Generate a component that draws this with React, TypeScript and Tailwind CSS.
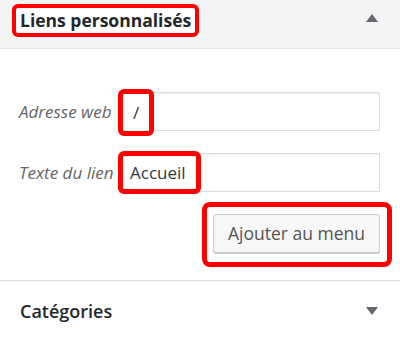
import React from "react";

const font = { fontFamily: '"Open Sans", "Noto Sans", sans-serif' };

function TriUp() {
  return (
    <svg width="12" height="8" viewBox="0 0 12 8">
      <polygon points="6,0 12,8 0,8" fill="#646970" />
    </svg>
  );
}
function TriDown() {
  return (
    <svg width="12" height="8" viewBox="0 0 12 8">
      <polygon points="0,0 12,0 6,8" fill="#646970" />
    </svg>
  );
}

export default function App() {
  return (
    <div className="w-[400px] h-[341px] bg-white overflow-hidden" style={font}>
      <div className="h-[49px] bg-[#f3f3f3] border-b border-[#e2e2e2] flex items-start justify-between pl-[12px] pr-[22px]">
        <div className="mt-[4px] h-[33px] border-[4px] border-[#ff0000] rounded-[6px] bg-white flex items-center px-[4px]">
          <span className="text-[17.5px] font-bold text-[#23282d] leading-none">Liens personnalisés</span>
        </div>
        <div className="mt-[14px]">
          <TriUp />
        </div>
      </div>

      <div className="pt-[43px] pl-[19px] pr-[20px]">
        <div className="flex items-center h-[39px]">
          <span className="w-[104px] text-[17px] italic text-[#666] whitespace-nowrap overflow-visible">Adresse web</span>
          <div className="relative flex-1 h-[39px] border border-[#ddd] shadow-[inset_0_1px_2px_rgba(0,0,0,0.07)] flex items-center">
            <div className="absolute left-[-6px] top-[-4px] w-[36px] h-[47px] border-[5px] border-[#ff0000] rounded-[6px] bg-white flex items-center pl-[10px]">
              <span className="text-[17px] text-[#32373c]">/</span>
            </div>
          </div>
        </div>

        <div className="flex items-center h-[39px] mt-[22px]">
          <span className="w-[104px] text-[17px] italic text-[#666] whitespace-nowrap overflow-visible">Texte du lien</span>
          <div className="relative flex-1 h-[39px] border border-[#ddd] shadow-[inset_0_1px_2px_rgba(0,0,0,0.07)] flex items-center">
            <div className="absolute left-[-6px] top-[-3px] w-[83px] h-[43px] border-[5px] border-[#ff0000] rounded-[6px] bg-white flex items-center pl-[7px]">
              <span className="text-[17px] text-[#32373c]">Accueil</span>
            </div>
          </div>
        </div>

        <div className="flex justify-end mt-[10px] mr-[-12px]">
          <div className="border-[5px] border-[#ff0000] rounded-[8px] pt-[7px] pb-[9px] pl-[6px] pr-[7px] bg-white">
            <div className="w-[167px] h-[39px] bg-[#f7f7f7] border border-[#ccc] rounded-[3px] shadow-[0_1px_0_#ccc] flex items-center justify-center">
              <span className="text-[17.5px] text-[#555]">Ajouter au menu</span>
            </div>
          </div>
        </div>
      </div>

      <div className="mt-[13px] border-t border-[#ddd] h-[61px] flex items-center justify-between pl-[20px] pr-[22px]">
        <span className="text-[18px] font-semibold text-[#23282d]">Catégories</span>
        <TriDown />
      </div>
    </div>
  );
}
